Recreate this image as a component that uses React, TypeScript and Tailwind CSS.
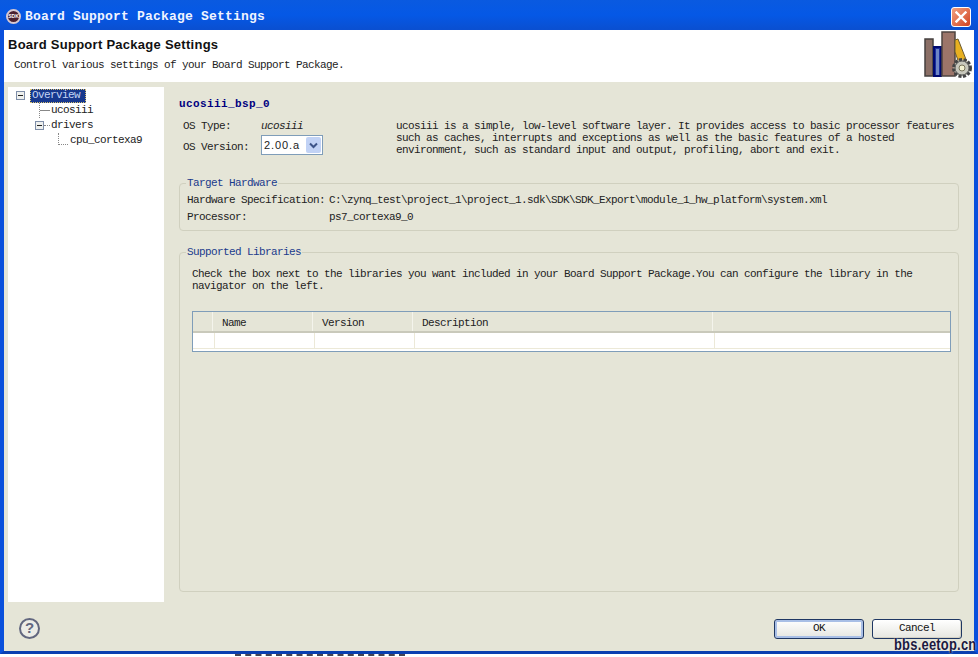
const mono = "font-['Liberation_Mono',monospace] text-[11px] tracking-[-0.6px]";

const MinusBox = () => (
  <span className="flex h-[9px] w-[9px] shrink-0 items-center justify-center border border-[#7f8ea8] bg-[#eef0ee]">
    <span className="h-px w-[5px] bg-[#222]" />
  </span>
);

const Books = () => (
  <svg width="54" height="50" viewBox="0 0 54 50" className="shrink-0 overflow-visible">
    <rect x="5" y="9" width="8" height="37" fill="#8b6f66" stroke="#45403f" strokeWidth="1.5" />
    <rect x="14" y="17" width="7" height="29" fill="#1c2fa0" stroke="#000a70" strokeWidth="2" />
    <rect x="16" y="19" width="3" height="26" fill="#6f86c6" />
    <rect x="22" y="2" width="13" height="44" fill="#9c7569" stroke="#4d4440" strokeWidth="1.5" />
    <path d="M35 10 L38 9 L47 32 L40 36 L35 22 Z" fill="#e8b020" stroke="#6b5a30" strokeWidth="1" />
    <circle cx="42" cy="38" r="8.5" fill="#b5b5aa" stroke="#444" strokeWidth="3" strokeDasharray="3 1.6" />
    <circle cx="42" cy="38" r="7" fill="#c8c8bc" stroke="#555" strokeWidth="1" />
    <circle cx="42" cy="38" r="3" fill="#f2f0d0" stroke="#77735a" strokeWidth="1" />
  </svg>
);

const XpButton = ({ label, isDefault }: { label: string; isDefault?: boolean }) => (
  <button
    className={`h-[20px] w-[90px] rounded-[3px] border border-[#1f3763] bg-gradient-to-b from-white to-[#e6e6e0] text-[#111] ${mono} ${
      isDefault ? "shadow-[inset_0_0_0_2px_#a9bfe6]" : "shadow-[inset_-1px_-1px_0_#d6d2c4]"
    }`}
  >
    {label}
  </button>
);

export default function App() {
  return (
    <div className={`relative flex h-[657px] w-[978px] flex-col overflow-hidden bg-white text-[#222] ${mono}`}>
      {/* barra de titulo */}
      <div className="flex h-[30px] shrink-0 items-center bg-gradient-to-b from-[#0a5ae0] via-[#0558e6] to-[#0a4fd0] pt-[3px] pr-[7px] pl-[6px]">
        <span className="flex h-[15px] w-[15px] items-center justify-center rounded-full border-2 border-[#d8c8d0] bg-[#4a2030] font-['Liberation_Sans',sans-serif] text-[5px] font-bold tracking-normal text-white">
          SDK
        </span>
        <span className="ml-[4px] font-['Liberation_Mono',monospace] text-[13px] font-bold tracking-[0.2px] text-[#f0f4ff]">
          Board Support Package Settings
        </span>
        <span className="ml-auto flex h-[20px] w-[20px] items-center justify-center rounded-[3px] border border-white bg-gradient-to-br from-[#f0a080] to-[#d0401c]">
          <svg width="12" height="12" viewBox="0 0 12 12">
            <path d="M1.5 1.5 L10.5 10.5 M10.5 1.5 L1.5 10.5" stroke="white" strokeWidth="2.4" strokeLinecap="square" />
          </svg>
        </span>
      </div>

      <div className="flex h-[624px] shrink-0 flex-col border-x-4 border-b-[3px] border-x-[#0a50dc] border-b-[#0a3fb0] bg-[#e5e5d7]">
        {/* encabezado */}
        <div className="flex h-[52px] shrink-0 items-start justify-between bg-white pl-[4px]">
          <div>
            <h1 className="mt-[7px] font-['Liberation_Sans',sans-serif] text-[13px] leading-[15px] font-bold tracking-[0.27px] text-[#111]">
              Board Support Package Settings
            </h1>
            <p className="mt-[6px] ml-[6px] leading-[14px]">Control various settings of your Board Support Package.</p>
          </div>
          <Books />
        </div>

        <div className="flex min-h-0 flex-1">
          {/* arbol */}
          <div className="mt-[5px] ml-[4px] h-[515px] w-[156px] shrink-0 bg-white pt-[1px] pl-[8px]">
            <div className="flex h-[15px] items-center">
              <MinusBox />
              <span className="ml-[5px] flex h-[14px] w-[56px] items-center border border-dotted border-[#d8c070] bg-[#17388e] pl-[1px] text-[#c4d4f4]">
                Overview
              </span>
            </div>
            <div className="flex h-[15px] items-center pl-[23px]">
              <span className="h-[15px] w-[11px] border-l border-dotted border-[#888] [background:linear-gradient(#888,#888)_0_7px/11px_1px_no-repeat]" />
              <span className="ml-px">ucosiii</span>
            </div>
            <div className="flex h-[15px] items-center pl-[19px]">
              <MinusBox />
              <span className="h-px w-[6px] border-t border-dotted border-[#888]" />
              <span className="ml-px">drivers</span>
            </div>
            <div className="flex h-[15px] items-center pl-[42px]">
              <span className="h-[12px] w-[10px] translate-y-[-2px] border-b border-l border-dotted border-[#888]" />
              <span className="ml-[2px]">cpu_cortexa9</span>
            </div>
          </div>

          {/* panel principal */}
          <div className="ml-[15px] w-[780px] shrink-0">
            <h2 className="mt-[15px] font-['Liberation_Mono',monospace] text-[11px] leading-[14px] font-bold tracking-[0.4px] text-[#000080]">
              ucosiii_bsp_0
            </h2>
            <div className="mt-[6px] flex">
              <div className="ml-[4px] w-[78px]">
                <div className="mt-[2px] h-[19px] leading-[14px]">OS Type:</div>
                <div className="h-[20px] leading-[18px]">OS Version:</div>
              </div>
              <div className="w-[135px]">
                <div className="mt-[2px] h-[14px] leading-[14px] italic">ucosiii</div>
                <div className="mt-[2px] flex h-[20px] w-[62px] items-center justify-between border border-[#7f9db9] bg-white pr-px pl-[2px]">
                  <span className="font-['Liberation_Sans',sans-serif] text-[11px] tracking-[0.9px]">2.00.a</span>
                  <span className="flex h-[16px] w-[15px] items-center justify-center rounded-[2px] bg-[#c1d2f5]">
                    <svg width="9" height="7" viewBox="0 0 9 7">
                      <path d="M1 1.5 L4.5 5 L8 1.5" fill="none" stroke="#3d5488" strokeWidth="2" />
                    </svg>
                  </span>
                </div>
              </div>
              <p className="mt-[3px] leading-[12px] whitespace-pre">
                {"ucosiii is a simple, low-level software layer. It provides access to basic processor features\nsuch as caches, interrupts and exceptions as well as the basic features of a hosted\nenvironment, such as standard input and output, profiling, abort and exit."}
              </p>
            </div>

            <fieldset className="mt-[19px] h-[54px] rounded-[4px] border border-[#d0d0bf] pl-[7px]">
              <legend className="ml-[-1px] px-px leading-[12px] text-[#1a3a8c]">Target Hardware</legend>
              <div className="mt-[3px] flex h-[17px] items-center">
                <span className="w-[142px]">Hardware Specification:</span>
                <span>{"C:\\zynq_test\\project_1\\project_1.sdk\\SDK\\SDK_Export\\module_1_hw_platform\\system.xml"}</span>
              </div>
              <div className="flex h-[17px] items-center">
                <span className="w-[142px]">Processor:</span>
                <span>ps7_cortexa9_0</span>
              </div>
            </fieldset>

            <fieldset className="mt-[15px] h-[346px] rounded-[4px] border border-[#d0d0bf] pl-[12px]">
              <legend className="ml-[-6px] px-px leading-[12px] text-[#1a3a8c]">Supported Libraries</legend>
              <p className="mt-[10px] leading-[12px]">
                Check the box next to the libraries you want included in your Board Support Package.You can configure the library in the
                <br />
                navigator on the left.
              </p>
              <div className="mt-[19px] h-[41px] w-[759px] border border-[#7f9db9] bg-white">
                <div className="flex h-[21px] border-b-2 border-[#c9c9bb] bg-[#e5e5d7]">
                  <div className="w-[20px] border-r border-[#f4f4ec]" />
                  <div className="flex w-[100px] items-center border-r border-[#f4f4ec] pt-[3px] pl-[9px]">Name</div>
                  <div className="flex w-[100px] items-center border-r border-[#f4f4ec] pt-[3px] pl-[9px]">Version</div>
                  <div className="flex w-[300px] items-center border-r border-[#f4f4ec] pt-[3px] pl-[9px]">Description</div>
                </div>
                <div className="flex h-[16px] border-b border-[#ece9d8] pl-[1px]">
                  <div className="w-[21px] border-r border-[#ece9d8]" />
                  <div className="w-[100px] border-r border-[#ece9d8]" />
                  <div className="w-[100px] border-r border-[#ece9d8]" />
                  <div className="w-[300px] border-r border-[#ece9d8]" />
                </div>
              </div>
            </fieldset>
          </div>
        </div>

        {/* pie */}
        <div className="flex h-[50px] shrink-0 items-center pt-[5px] pr-[12px] pl-[15px]">
          <span className="flex h-[21px] w-[21px] items-center justify-center rounded-full border-2 border-[#62677f] bg-[#ecece6] font-['Liberation_Sans',sans-serif] text-[15px] font-bold tracking-normal text-[#62677f]">
            ?
          </span>
          <div className="ml-auto flex gap-[8px]">
            <XpButton label="OK" isDefault />
            <XpButton label="Cancel" />
          </div>
        </div>
      </div>

      {/* restos de la ventana de atras */}
      <div className="h-[3px] pl-[235px]">
        <div className="w-[170px] border-t-2 border-dashed border-[#445]" />
      </div>

      {/* marca de agua */}
      <span className="absolute top-[636px] left-[894px] origin-left scale-x-[0.76] font-['Liberation_Sans',sans-serif] text-[17px] leading-[17px] font-bold tracking-[0.3px] text-[#1c1a40] [text-shadow:0_0_2px_#fff]">
        bbs.eetop.cn
      </span>
    </div>
  );
}
